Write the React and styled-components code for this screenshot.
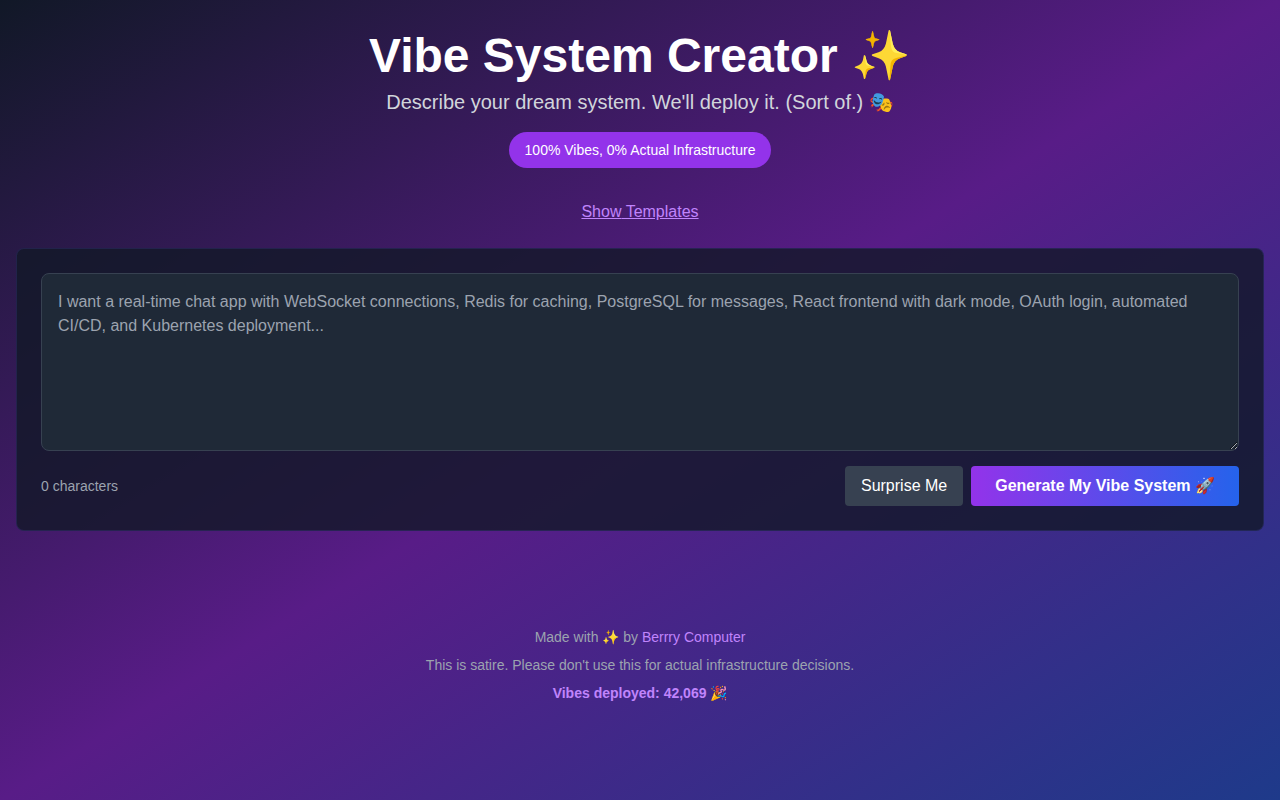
import React, { useState } from "react";
import styled, { createGlobalStyle } from "styled-components";

const GlobalStyle = createGlobalStyle`
    *, *::before, *::after {
        box-sizing: border-box;
    }

    body {
        margin: 0;
        font-family: "Liberation Sans", Arial, sans-serif;
        font-size: 16px;
        line-height: 24px;
        color: #fff;
    }

    h1, p {
        margin: 0;
    }

    button, textarea {
        font: inherit;
    }
`;

const Page = styled.div`
    min-height: 100vh;
    background: linear-gradient(to bottom right, #111827, #581c87, #1e3a8a);
`;

const Container = styled.div`
    max-width: 1536px;
    margin: 0 auto;
    padding: 32px 16px;
`;

const Header = styled.header`
    display: flex;
    flex-direction: column;
    align-items: center;
    text-align: center;
    margin-bottom: 32px;
`;

const Title = styled.h1`
    font-size: 48px;
    line-height: 48px;
    font-weight: 700;
    margin-bottom: 8px;
`;

const Tagline = styled.p`
    font-size: 20px;
    line-height: 28px;
    color: #d1d5db;
`;

const Badge = styled.span`
    margin-top: 16px;
    padding: 8px 16px;
    border-radius: 9999px;
    background-color: #9333ea;
    font-size: 14px;
    line-height: 20px;
`;

const TemplateRow = styled.div`
    display: flex;
    flex-direction: column;
    align-items: center;
    gap: 16px;
    margin-bottom: 24px;
`;

const LinkButton = styled.button`
    padding: 0;
    border: none;
    background: transparent;
    color: #c084fc;
    text-decoration: underline;
    cursor: pointer;
    &:hover { color: #d8b4fe; }
`;

const TemplateList = styled.div`
    display: flex;
    flex-wrap: wrap;
    gap: 8px;
`;

const Panel = styled.section`
    padding: 24px;
    border: 1px solid rgba(99, 102, 241, 0.15);
    border-radius: 8px;
    background-color: rgba(17, 24, 39, 0.8);
`;

const PromptBox = styled.textarea`
    display: block;
    width: 100%;
    padding: 16px;
    border: 1px solid #374151;
    border-radius: 8px;
    background-color: #1f2937;
    color: #fff;
    resize: vertical;
    &::placeholder { color: #9ca3af; }
    &:focus { outline: 2px solid #9333ea; }
`;

const ActionBar = styled.div`
    display: flex;
    flex-wrap: wrap;
    align-items: center;
    justify-content: space-between;
    margin-top: 15px;
`;

const CharCount = styled.label`
    font-size: 14px;
    line-height: 20px;
    color: #9ca3af;
`;

const Buttons = styled.div`
    display: flex;
    gap: 8px;
`;

const ActionButton = styled.button`
    padding: ${({ $primary }) => ($primary ? "8px 24px" : "8px 16px")};
    border: none;
    border-radius: 4px;
    background: ${({ $primary }) =>
        $primary ? "linear-gradient(to right, #9333ea, #2563eb)" : "#374151"};
    color: #fff;
    font-weight: ${({ $primary }) => ($primary ? 700 : 400)};
    cursor: pointer;
`;

const Footer = styled.footer`
    display: flex;
    flex-direction: column;
    align-items: center;
    gap: 8px;
    margin-top: 64px;
    padding: 32px 0;
    font-size: 14px;
    line-height: 20px;
    text-align: center;
    color: #9ca3af;
`;

const FooterLink = styled.a`
    color: #c084fc;
    text-decoration: none;
    &:hover { text-decoration: underline; }
`;

const VibeCounter = styled.p`
    color: #c084fc;
    font-weight: 700;
`;

const PLACEHOLDER =
    "I want a real-time chat app with WebSocket connections, Redis for caching, PostgreSQL for messages, React frontend with dark mode, OAuth login, automated CI/CD, and Kubernetes deployment...";

const TEMPLATES = [
    "Real-time chat app with WebSockets and Redis",
    "Photo sharing site with OAuth login",
    "Online store with PostgreSQL and Kubernetes",
];

const App = () => {
    const [prompt, setPrompt] = useState("");
    const [showTemplates, setShowTemplates] = useState(false);

    const surpriseMe = () => {
        setPrompt(TEMPLATES[Math.floor(Math.random() * TEMPLATES.length)]);
    };

    return (
        <Page>
            <GlobalStyle />
            <Container>
                <Header>
                    <Title>Vibe System Creator ✨</Title>
                    <Tagline>Describe your dream system. We'll deploy it. (Sort of.) 🎭</Tagline>
                    <Badge>100% Vibes, 0% Actual Infrastructure</Badge>
                </Header>

                <main>
                    <TemplateRow>
                        <LinkButton onClick={() => setShowTemplates(!showTemplates)}>
                            {showTemplates ? "Hide" : "Show"} Templates
                        </LinkButton>
                        {showTemplates && (
                            <TemplateList>
                                {TEMPLATES.map((template) => (
                                    <ActionButton key={template} onClick={() => setPrompt(template)}>
                                        {template}
                                    </ActionButton>
                                ))}
                            </TemplateList>
                        )}
                    </TemplateRow>

                    <Panel>
                        <PromptBox
                            id="prompt"
                            rows={6}
                            value={prompt}
                            placeholder={PLACEHOLDER}
                            onChange={(e) => setPrompt(e.target.value)}
                        />
                        <ActionBar>
                            <CharCount htmlFor="prompt">{prompt.length} characters</CharCount>
                            <Buttons>
                                <ActionButton onClick={surpriseMe}>Surprise Me</ActionButton>
                                <ActionButton $primary>Generate My Vibe System 🚀</ActionButton>
                            </Buttons>
                        </ActionBar>
                    </Panel>
                </main>

                <Footer>
                    <p>
                        Made with ✨ by <FooterLink href="#">Berrry Computer</FooterLink>
                    </p>
                    <p>This is satire. Please don't use this for actual infrastructure decisions.</p>
                    <VibeCounter>Vibes deployed: 42,069 🎉</VibeCounter>
                </Footer>
            </Container>
        </Page>
    );
};

export default App;
